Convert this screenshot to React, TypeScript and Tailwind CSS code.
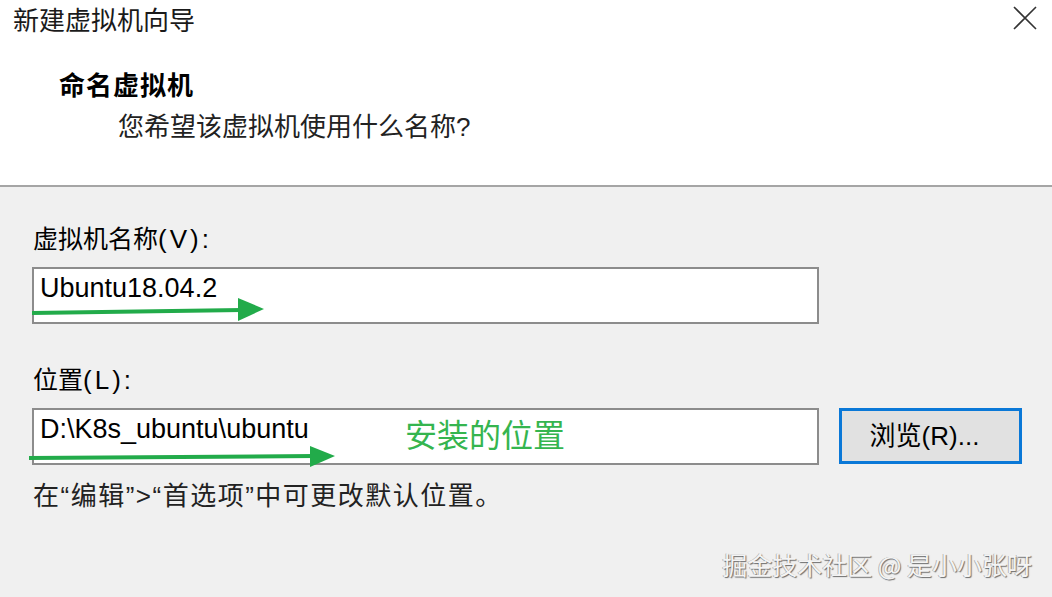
const FONT = "font-['Liberation_Sans','Noto_Sans_CJK_SC',sans-serif]";
const CJK = "font-['Noto_Sans_CJK_SC',sans-serif]";

function Arrow({ line, head, width, height }: { line: [number, number, number, number]; head: string; width: number; height: number }) {
  return (
    <svg
      className="pointer-events-none absolute left-0 top-0 overflow-visible"
      width={width}
      height={height}
      viewBox={`0 0 ${width} ${height}`}
    >
      <line x1={line[0]} y1={line[1]} x2={line[2]} y2={line[3]} stroke="#22ab4a" strokeWidth="4" />
      <polygon points={head} fill="#22ab4a" />
    </svg>
  );
}

export default function App() {
  return (
    <div className={`flex h-[597px] w-[1052px] flex-col bg-[#f0f0f0] text-black ${FONT}`}>
      {/* Header */}
      <div className="h-[185px] shrink-0 border-b-2 border-[#a5a5a5] bg-white box-content">
        <div className="flex items-start justify-between pl-[13px] pr-[15px] pt-[4px]">
          <h1 className={`text-[26px] leading-[30px] text-[#1a1a1a] ${CJK}`}>新建虚拟机向导</h1>
          <svg width="24" height="24" viewBox="0 0 24 24" className="mt-[2px]">
            <path d="M1 1 L23 23 M23 1 L1 23" stroke="#333" strokeWidth="1.6" />
          </svg>
        </div>
        <div className="mt-[37px] pl-[59px] text-[26px] font-bold leading-[30px] tracking-[1px]">命名虚拟机</div>
        <div className="mt-[11px] pl-[118px] text-[26px] leading-[30px] text-[#222]">您希望该虚拟机使用什么名称?</div>
      </div>

      {/* Body */}
      <div className="flex flex-1 flex-col pl-[32px] pt-[37px]">
        <label className="pl-[1px] text-[25px] leading-[30px]">
          虚拟机名称<span className="text-[26px] tracking-[3px]">(V):</span>
        </label>
        <div className="relative mt-[13px] flex h-[57px] w-[787px] items-start border-2 border-[#8c8c8c] bg-white pl-[6px] pt-[4px]">
          <span className="text-[27px] leading-[30px]">Ubuntu18.04.2</span>
          <Arrow line={[-2, 44, 208, 41]} head="204,29 230,40 204,52" width={240} height={57} />
        </div>

        <label className="mt-[41px] pl-[1px] text-[25px] leading-[30px]">
          位置<span className="text-[26px] tracking-[3px]">(L):</span>
        </label>
        <div className="mt-[13px] flex items-start gap-[20px]">
          <div className="relative flex h-[57px] w-[787px] items-start border-2 border-[#8c8c8c] bg-white pl-[6px] pt-[4px]">
            <span className="text-[27px] leading-[30px]">D:\K8s_ubuntu\ubuntu</span>
            <span className={`absolute left-[371px] top-[7px] text-[32px] leading-[32px] text-[#35b54f] ${CJK}`}>安装的位置</span>
            <Arrow line={[-5, 48, 281, 46]} head="276,36 301,46 276,57" width={310} height={57} />
          </div>
          <button className="flex h-[56px] w-[183px] items-center justify-center border-[3px] border-[#0a78d7] bg-[#e1e1e1] pr-[12px] text-[26px] leading-[30px]">
            浏览(R)...
          </button>
        </div>

        <p className="mt-[16px] pl-[1px] text-[26px] leading-[30px] tracking-[1.5px] text-[#222]">在“编辑”&gt;“首选项”中可更改默认位置。</p>

        <div className="mt-[38px] flex justify-end pr-[20px]">
          <span className={`text-[25px] leading-[30px] text-[#f4f4f4] [text-shadow:1px_1px_1px_rgba(0,0,0,0.55),-1px_0_0_rgba(0,0,0,0.25)] ${CJK}`}>
            掘金技术社区 @ 是小小张呀
          </span>
        </div>
      </div>
    </div>
  );
}
